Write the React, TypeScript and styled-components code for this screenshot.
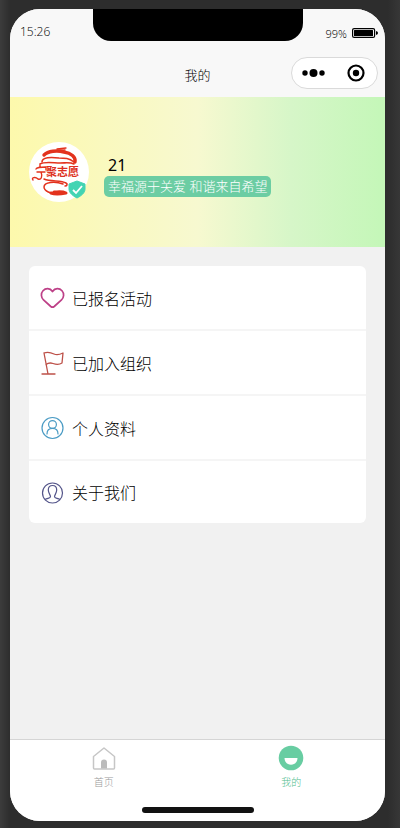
import React from 'react';
import styled, { createGlobalStyle } from 'styled-components';

const GlobalStyle = createGlobalStyle`
  * { box-sizing: border-box; }
  body {
    margin: 0;
    background: #2f2f2f;
    color: #000;
    font-family: "Noto Sans", "Noto Sans CJK SC", sans-serif;
    font-weight: 300;
  }
  button { font: inherit; color: inherit; border: 0; padding: 0; background: none; cursor: pointer; }
  a { color: inherit; text-decoration: none; }
  svg { display: block; flex: none; }
`;

const Bezel = styled.div`
  min-height: 100vh;
  display: flex;
  padding: 9px 15px 7px 10px;
  background: linear-gradient(90deg, #3c3c3c, #2d2d2d 10px, #2d2d2d calc(100% - 12px), #373737);
`;

const Phone = styled.div`
  flex: 1;
  min-width: 0;
  display: flex;
  flex-direction: column;
  overflow: hidden;
  border-radius: 30px;
  background: #f1f1f1;
`;

const StatusBar = styled.div`
  height: 48px;
  display: grid;
  grid-template-columns: 1fr 210px 1fr;
  padding: 0 7px;
  background: #f8f8f8;
  font-family: "Open Sans", "Noto Sans", sans-serif;
  font-size: 12px;
`;

const Clock = styled.span`
  padding-left: 3px;
  line-height: 46px;
`;

const Notch = styled.div`
  height: 32px;
  border-radius: 0 0 18px 18px;
  background: #000;
`;

const Battery = styled.div`
  display: flex;
  align-items: center;
  justify-content: flex-end;
  gap: 5px;
  font-size: 11px;
`;

const NavBar = styled.header`
  height: 40px;
  display: grid;
  grid-template-columns: 1fr auto 1fr;
  padding: 0 7px;
  background: #f8f8f8;
`;

const Title = styled.h1`
  grid-column: 2;
  margin: 0;
  font-size: 13px;
  line-height: 36px;
  font-weight: 300;
`;

const Capsule = styled.div`
  justify-self: end;
  width: 87px;
  height: 32px;
  display: grid;
  grid-template-columns: 1fr 1fr;
  border: 1px solid #dadada;
  border-radius: 16px;
  background: #fff;
`;

const CapsuleButton = styled.button`
  display: grid;
  place-items: center;
`;

const Profile = styled.section`
  height: 150px;
  display: flex;
  align-items: center;
  gap: 15px;
  padding: 0 19px;
  background: linear-gradient(90deg, #fdf9ac, #f7f9d0 50%, #d6f6c8 75%, #c4f7b8);
`;

const ProfileText = styled.div`
  padding-top: 8px;
`;

const Name = styled.div`
  padding-left: 4px;
  font-size: 16px;
  line-height: 21px;
  font-weight: 400;
`;

const Motto = styled.div`
  padding: 0 4px;
  border-radius: 5px;
  background: #6ccda3;
  color: #fff;
  font-size: 13px;
  line-height: 21px;
  white-space: nowrap;
`;

const Content = styled.main`
  flex: 1;
  padding: 19px;
`;

const Menu = styled.nav`
  border-radius: 6px;
  background: #fff;
`;

const MenuItem = styled.a`
  height: 65px;
  display: flex;
  align-items: center;
  gap: 7px;
  padding: 0 11px;
  border-bottom: 2px solid #f5f5f5;
  font-size: 16px;
  &:last-child { height: 62px; border-bottom: 0; }
`;

const TabBar = styled.nav`
  display: grid;
  grid-template-columns: 1fr 1fr;
  padding-top: 5px;
  border-top: 1px solid #d5d5d5;
  background: #fff;
`;

const Tab = styled.a<{ $active?: boolean }>`
  display: flex;
  flex-direction: column;
  align-items: center;
  gap: 4px;
  font-size: 10px;
  line-height: 14px;
  color: ${p => (p.$active ? '#4fbd8e' : '#999')};
`;

const HomeBar = styled.div`
  display: grid;
  justify-content: center;
  padding: 18px 0 8px;
  background: #fff;
`;

const HomeIndicator = styled.div`
  width: 112px;
  height: 6px;
  border-radius: 3px;
  background: #111;
`;

const BatteryIcon = () => (
  <svg width="26" height="10" viewBox="0 0 26 10" aria-hidden="true">
    <rect x=".6" y=".6" width="22" height="8.8" rx="1.5" fill="none" stroke="#000" strokeWidth="1.2" />
    <rect x="2" y="2" width="19" height="6" rx=".5" />
    <path d="M24 3q2 .3 2 2t-2 2z" />
  </svg>
);

const Avatar = () => (
  <svg width="60" height="60" viewBox="0 0 60 60" role="img" aria-label="宁聚志愿">
    <circle cx="30" cy="30" r="30" fill="#fff" />
    <g fill="none" stroke="#e3321d" strokeLinecap="round" strokeLinejoin="round">
      <path d="m28 7 9-1M24 9l12-1" strokeWidth="1.3" />
      <path d="M15 13c4-4 13-5 20-3 7 1 12 5 11 10" strokeWidth="3.4" />
      <path d="M13 20c0-5 9-5 17-4 6 0 10 0 15 4" strokeWidth="1.6" />
      <path d="M11 22c5-3 14-1 20-1 6 0 10-1 14 1" strokeWidth="1.6" />
      <path d="M15 37c7 3 17 1 22 4 2 1 1 3-1 3" strokeWidth="1.5" />
      <path d="M34 42c-8-3-19-2-19 3 0 4 7 7 13 7" strokeWidth="1.5" />
      <path d="M22 51c5 2 10 1 15 0-4-2-8-1-12-1" strokeWidth="3" />
      <path d="M7 27c1-2 6-2 10-2v3M11 23v2M8 30h8M12 30c2 5 0 8-3 7-3-3-7-1-5 1" strokeWidth="1.4" />
    </g>
    <text x="17" y="34" fill="#dd3022" fontSize="11" fontWeight="700" fontFamily="Noto Sans CJK SC">聚志愿</text>
    <path d="m48 39 8 3v5c0 4-4 7-8 9-4-2-8-5-8-9v-5z" fill="#43d4b3" stroke="#43d4b3" strokeWidth="1" strokeLinejoin="round" />
    <path d="m44 48 3 3 6-7" fill="none" stroke="#fff" strokeWidth="1.8" />
  </svg>
);

const HeartIcon = () => (
  <svg width="25" height="25" viewBox="0 0 25 25" fill="none" stroke="#bd4087" strokeWidth="1.7" strokeLinejoin="round" aria-hidden="true">
    <path d="M12.500 6.500C10 2.800 5.500 3 3 5.800.6 8.500 1 12.500 3.500 14.800L10.800 21.500q1.700 1.400 3.400 0L21.500 14.800C24 12.500 24.400 8.500 22 5.800 19.500 3 15 2.800 12.500 6.500Z" />
  </svg>
);

const FlagIcon = () => (
  <svg width="25" height="25" viewBox="0 0 25 25" fill="none" stroke="#bd5048" strokeWidth="1.3" strokeLinejoin="round" strokeLinecap="round" aria-hidden="true">
    <path d="M2 24h13M4 3l4 21M4 3c4-1.500 7-.5 10 1s6 .500 9-1l-1 10c-3 2-6 1.500-9 .500s-5-.500-7 1" />
  </svg>
);

const PersonIcon = () => (
  <svg width="25" height="25" viewBox="0 0 25 25" fill="none" stroke="#4a9bc4" strokeWidth="1.2" strokeLinecap="round" aria-hidden="true">
    <circle cx="12.5" cy="13" r="10.5" />
    <circle cx="12.5" cy="9.500" r="3.900" />
    <path d="M7 19c0-3.500 2.300-5.600 5.500-5.600S18 15.500 18 19" />
  </svg>
);

const AboutIcon = () => (
  <svg width="25" height="25" viewBox="0 0 25 25" fill="none" stroke="#54558a" strokeWidth="1.2" aria-hidden="true">
    <circle cx="12.5" cy="13" r="10" />
    <path d="M5 19.500c3-1.500 5.500-1 5.500-3 0-1.500-2.200-3.500-2.200-6.500 0-3 1.500-4.500 4.200-4.500s4.200 1.500 4.200 4.500c0 3-2.200 5-2.200 6.500 0 2 2.500 1.500 5.500 3" />
  </svg>
);

const HomeIcon = () => (
  <svg width="26" height="26" viewBox="0 0 26 26" aria-hidden="true">
    <path d="M2.500 11.500 13 3l10.500 8.500V23q0 1-1 1h-19q-1 0-1-1z" fill="none" stroke="#c6c6c6" strokeWidth="1.5" strokeLinejoin="round" />
    <path d="M10 23.500v-6q0-3 3-3t3 3v6z" fill="#bbb" />
  </svg>
);

const SmileIcon = () => (
  <svg width="26" height="26" viewBox="0 0 26 26" aria-hidden="true">
    <circle cx="13" cy="13" r="12.300" fill="#68cda2" />
    <path d="M6.500 13h13c0 9-13 9-13 0z" fill="#fff" />
  </svg>
);

const menuItems = [
  { label: '已报名活动', Icon: HeartIcon },
  { label: '已加入组织', Icon: FlagIcon },
  { label: '个人资料', Icon: PersonIcon },
  { label: '关于我们', Icon: AboutIcon },
];

export default function App() {
  return (
    <>
      <GlobalStyle />
      <Bezel>
        <Phone>
          <StatusBar>
            <Clock>15:26</Clock>
            <Notch />
            <Battery><span>99%</span><BatteryIcon /></Battery>
          </StatusBar>
          <NavBar>
            <Title>我的</Title>
            <Capsule>
              <CapsuleButton type="button" aria-label="更多">
                <svg width="24" height="10" viewBox="0 0 24 10">
                  <circle cx="4" cy="5" r="2.700" /><circle cx="12.500" cy="5" r="4" /><circle cx="21" cy="5" r="2.700" />
                </svg>
              </CapsuleButton>
              <CapsuleButton type="button" aria-label="关闭">
                <svg width="18" height="18" viewBox="0 0 18 18">
                  <circle cx="9" cy="9" r="7.500" fill="none" stroke="#000" strokeWidth="2.200" /><circle cx="9" cy="9" r="3.200" />
                </svg>
              </CapsuleButton>
            </Capsule>
          </NavBar>
          <Profile>
            <Avatar />
            <ProfileText>
              <Name>21</Name>
              <Motto>幸福源于关爱 和谐来自希望</Motto>
            </ProfileText>
          </Profile>
          <Content>
            <Menu>
              {menuItems.map(({ label, Icon }) => (
                <MenuItem href="#" key={label}><Icon />{label}</MenuItem>
              ))}
            </Menu>
          </Content>
          <TabBar>
            <Tab href="#"><HomeIcon />首页</Tab>
            <Tab href="#" $active aria-current="page"><SmileIcon />我的</Tab>
          </TabBar>
          <HomeBar><HomeIndicator /></HomeBar>
        </Phone>
      </Bezel>
    </>
  );
}
